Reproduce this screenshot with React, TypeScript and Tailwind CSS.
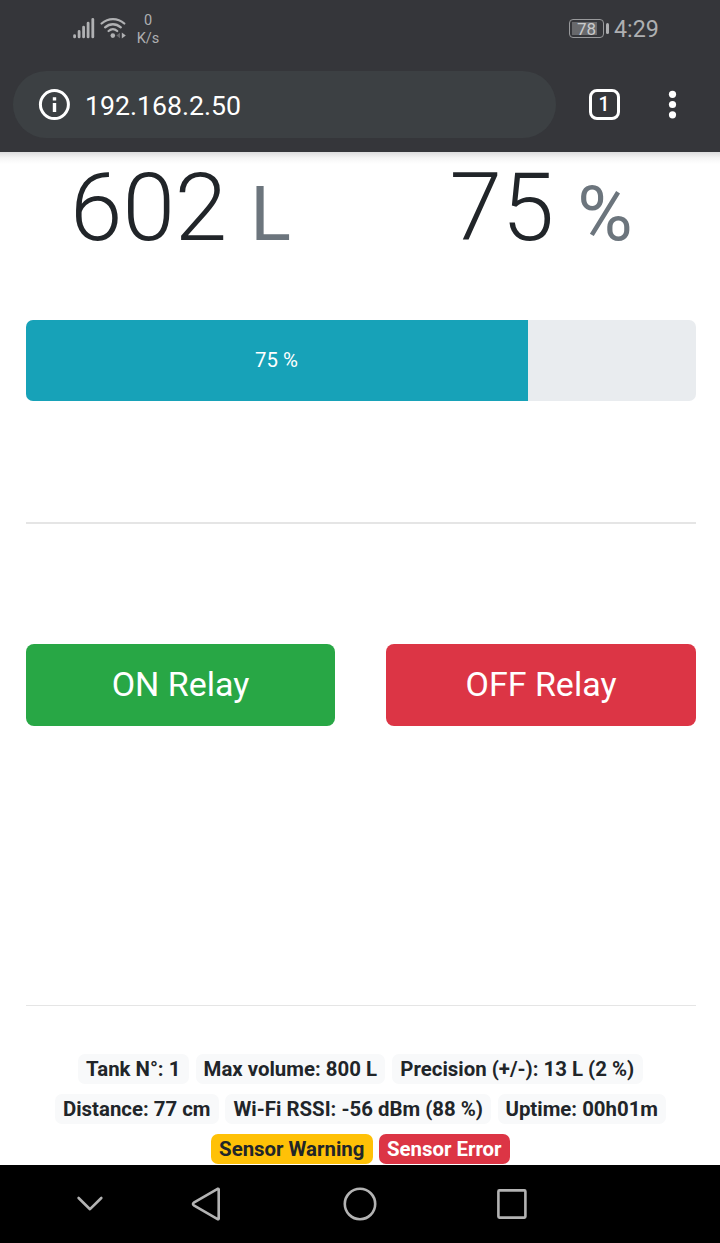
import React from "react";

function StatusBar() {
  return (
    <div className="flex h-[58px] w-full items-start text-[#aeafb1]">
      <svg className="ml-[70px] mt-[14px] h-7 w-[60px] shrink-0" viewBox="70 14 60 28" fill="none">
        <g stroke="#b0b1b3" strokeWidth="2.8" strokeLinecap="round">
          <path d="M74.6 35.6V36.9M79.1 31.4V36.9M83.6 27.2V36.9M88.1 23.1V36.9M92.8 19.3V36.9" />
        </g>
        <g stroke="#b0b1b3" strokeWidth="2.3" strokeLinecap="round">
          <path d="M101.6 23.5C108.4 17.6 117.6 17.6 124.3 23.5" />
          <path d="M105.1 27.3C109.8 23.2 116 23.2 120.8 27.3" />
          <path d="M108.6 31C111.2 28.7 114.6 28.7 117.2 31" />
        </g>
        <circle cx="112.8" cy="35.6" r="2.3" fill="#b0b1b3" />
        <path d="M120 32.8V38.2L116.3 35.5Z" fill="#696a6d" />
        <path d="M121.8 32.5V38.5L125.8 35.5Z" fill="#b0b1b3" />
      </svg>
      <div className="mt-3 flex w-9 flex-col items-center text-[14.5px] leading-[18px]">
        <span>0</span>
        <span>K/s</span>
      </div>
      <div className="ml-[403px] mt-[19px] flex items-center">
        <div className="flex h-[19px] w-[35px] rounded-[4px] border border-[#98999b] p-[2px]">
          <div className="flex w-[25px] items-center justify-center bg-[#68696c] pl-[4px] pt-px text-[17px] leading-none text-[#c9cacb]">78</div>
        </div>
        <div className="ml-[2px] h-[11px] w-[2.5px] rounded-sm bg-[#aeafb1]" />
      </div>
      <span className="ml-[5.5px] mt-[15px] text-[23.3px] leading-7">4:29</span>
    </div>
  );
}

function AddressBar() {
  return (
    <div className="flex h-[94px] items-start pl-[13px] pt-[13px]">
      <div className="flex h-[67px] w-[543px] items-center rounded-full bg-[#3c4043] pl-[25px]">
        <svg className="h-8 w-8" viewBox="0 0 32 32">
          <circle cx="16.4" cy="15.6" r="14" fill="none" stroke="white" strokeWidth="3" />
          <path d="M14.8 8.2h3.4v3.2h-3.4zM14.8 14h3.4v9h-3.4z" fill="white" />
        </svg>
        <span className="ml-[15px] mt-[3px] text-[26.7px] leading-8 text-white">192.168.2.50</span>
      </div>
      <div className="ml-[33px] mt-[18px] flex size-[31px] items-center justify-center rounded-[8px] border-3 border-white pr-px text-[19.5px] font-medium leading-none text-white">1</div>
      <svg className="ml-[47px] mt-[18px] h-8 w-[11px]" viewBox="0 0 11 32" fill="white">
        <circle cx="5.5" cy="5.3" r="3.6" />
        <circle cx="5.5" cy="15.5" r="3.6" />
        <circle cx="5.5" cy="25.8" r="3.6" />
      </svg>
    </div>
  );
}

function Reading({ value, unit }: { value: string; unit: string }) {
  return (
    <div className="text-center text-[94.5px] font-light leading-[115px] text-[#212529]">
      {value} <small className="text-[75.6px] font-normal text-[#6c757d]">{unit}</small>
    </div>
  );
}

function Badge({ children, className }: { children: React.ReactNode; className: string }) {
  return (
    <span className={`flex h-[30px] items-center justify-center whitespace-nowrap rounded-[7px] text-[20.4px] font-bold leading-none ${className}`}>
      {children}
    </span>
  );
}

function NavigationBar() {
  return (
    <footer className="h-[78px] bg-black">
      <svg className="h-[78px] w-[720px]" viewBox="0 1165 720 78" fill="none" stroke="#b3b3b3" strokeWidth="2.6" strokeLinecap="round" strokeLinejoin="round">
        <path d="M78.6 1198L90 1209.2L101.3 1198" />
        <path d="M217.6 1188.8L193.8 1202.7Q192.2 1204 193.8 1205.3L217.6 1219.2Q218.7 1219.6 218.7 1218.4V1189.6Q218.7 1188.4 217.6 1188.8Z" />
        <circle cx="360" cy="1204" r="15.2" />
        <rect x="498.4" y="1190.4" width="27" height="27.2" rx="1" />
      </svg>
    </footer>
  );
}

export default function App() {
  return (
    <div className="flex h-[1243px] w-[720px] flex-col overflow-hidden bg-white font-[Roboto,sans-serif]">
      <header className="h-[152px] shrink-0 bg-[#35363a]">
        <StatusBar />
        <AddressBar />
      </header>
      <main className="flex h-[1013px] shrink-0 flex-col">
        <div className="h-3 shrink-0 bg-linear-to-b from-[#dcdcdd] via-[#f5f5f5] to-white" />
        <div className="flex grow flex-col pl-[26px] pr-6">
          <div className="-mt-[14px] grid h-[115px] grid-cols-[309px_310px] gap-[51px]">
            <Reading value="602" unit="L" />
            <Reading value="75" unit="%" />
          </div>
          <div className="mt-[55px] h-[81px] overflow-hidden rounded-[7px] bg-[#e9ecef]">
            <div className="flex h-full w-[502px] items-center justify-center bg-[#17a2b8] pr-px text-[20.4px] text-white">75 %</div>
          </div>
          <hr className="mt-[121px] border-t-2 border-[#e5e5e5]" />
          <div className="mt-[120px] grid h-[82px] grid-cols-[309px_310px] gap-[51px] text-[34px] text-white">
            <button className="rounded-[8px] bg-[#28a745] pb-[2px]">ON Relay</button>
            <button className="rounded-[8px] bg-[#dc3545] pb-[2px]">OFF Relay</button>
          </div>
          <hr className="mt-[279px] border-[#e5e5e5]" />
          <div className="mr-[1.5px] mt-12 flex flex-col gap-[10px] text-[#212529]">
            <div className="flex justify-center gap-[7.5px]">
              <Badge className="w-[110.5px] bg-[#f8f9fa]">Tank N°: 1</Badge>
              <Badge className="w-[188.5px] bg-[#f8f9fa]">Max volume: 800 L</Badge>
              <Badge className="w-[250.5px] bg-[#f8f9fa]">Precision (+/-): 13 L (2 %)</Badge>
            </div>
            <div className="flex justify-center gap-[6.5px]">
              <Badge className="w-[164px] bg-[#f8f9fa]">Distance: 77 cm</Badge>
              <Badge className="w-[266px] bg-[#f8f9fa]">Wi-Fi RSSI: -56 dBm (88 %)</Badge>
              <Badge className="w-[168px] bg-[#f8f9fa]">Uptime: 00h01m</Badge>
            </div>
            <div className="flex justify-center gap-[6px]">
              <Badge className="w-[162px] bg-[#ffc107]">Sensor Warning</Badge>
              <Badge className="w-[131px] bg-[#dc3545] text-white">Sensor Error</Badge>
            </div>
          </div>
        </div>
      </main>
      <NavigationBar />
    </div>
  );
}
